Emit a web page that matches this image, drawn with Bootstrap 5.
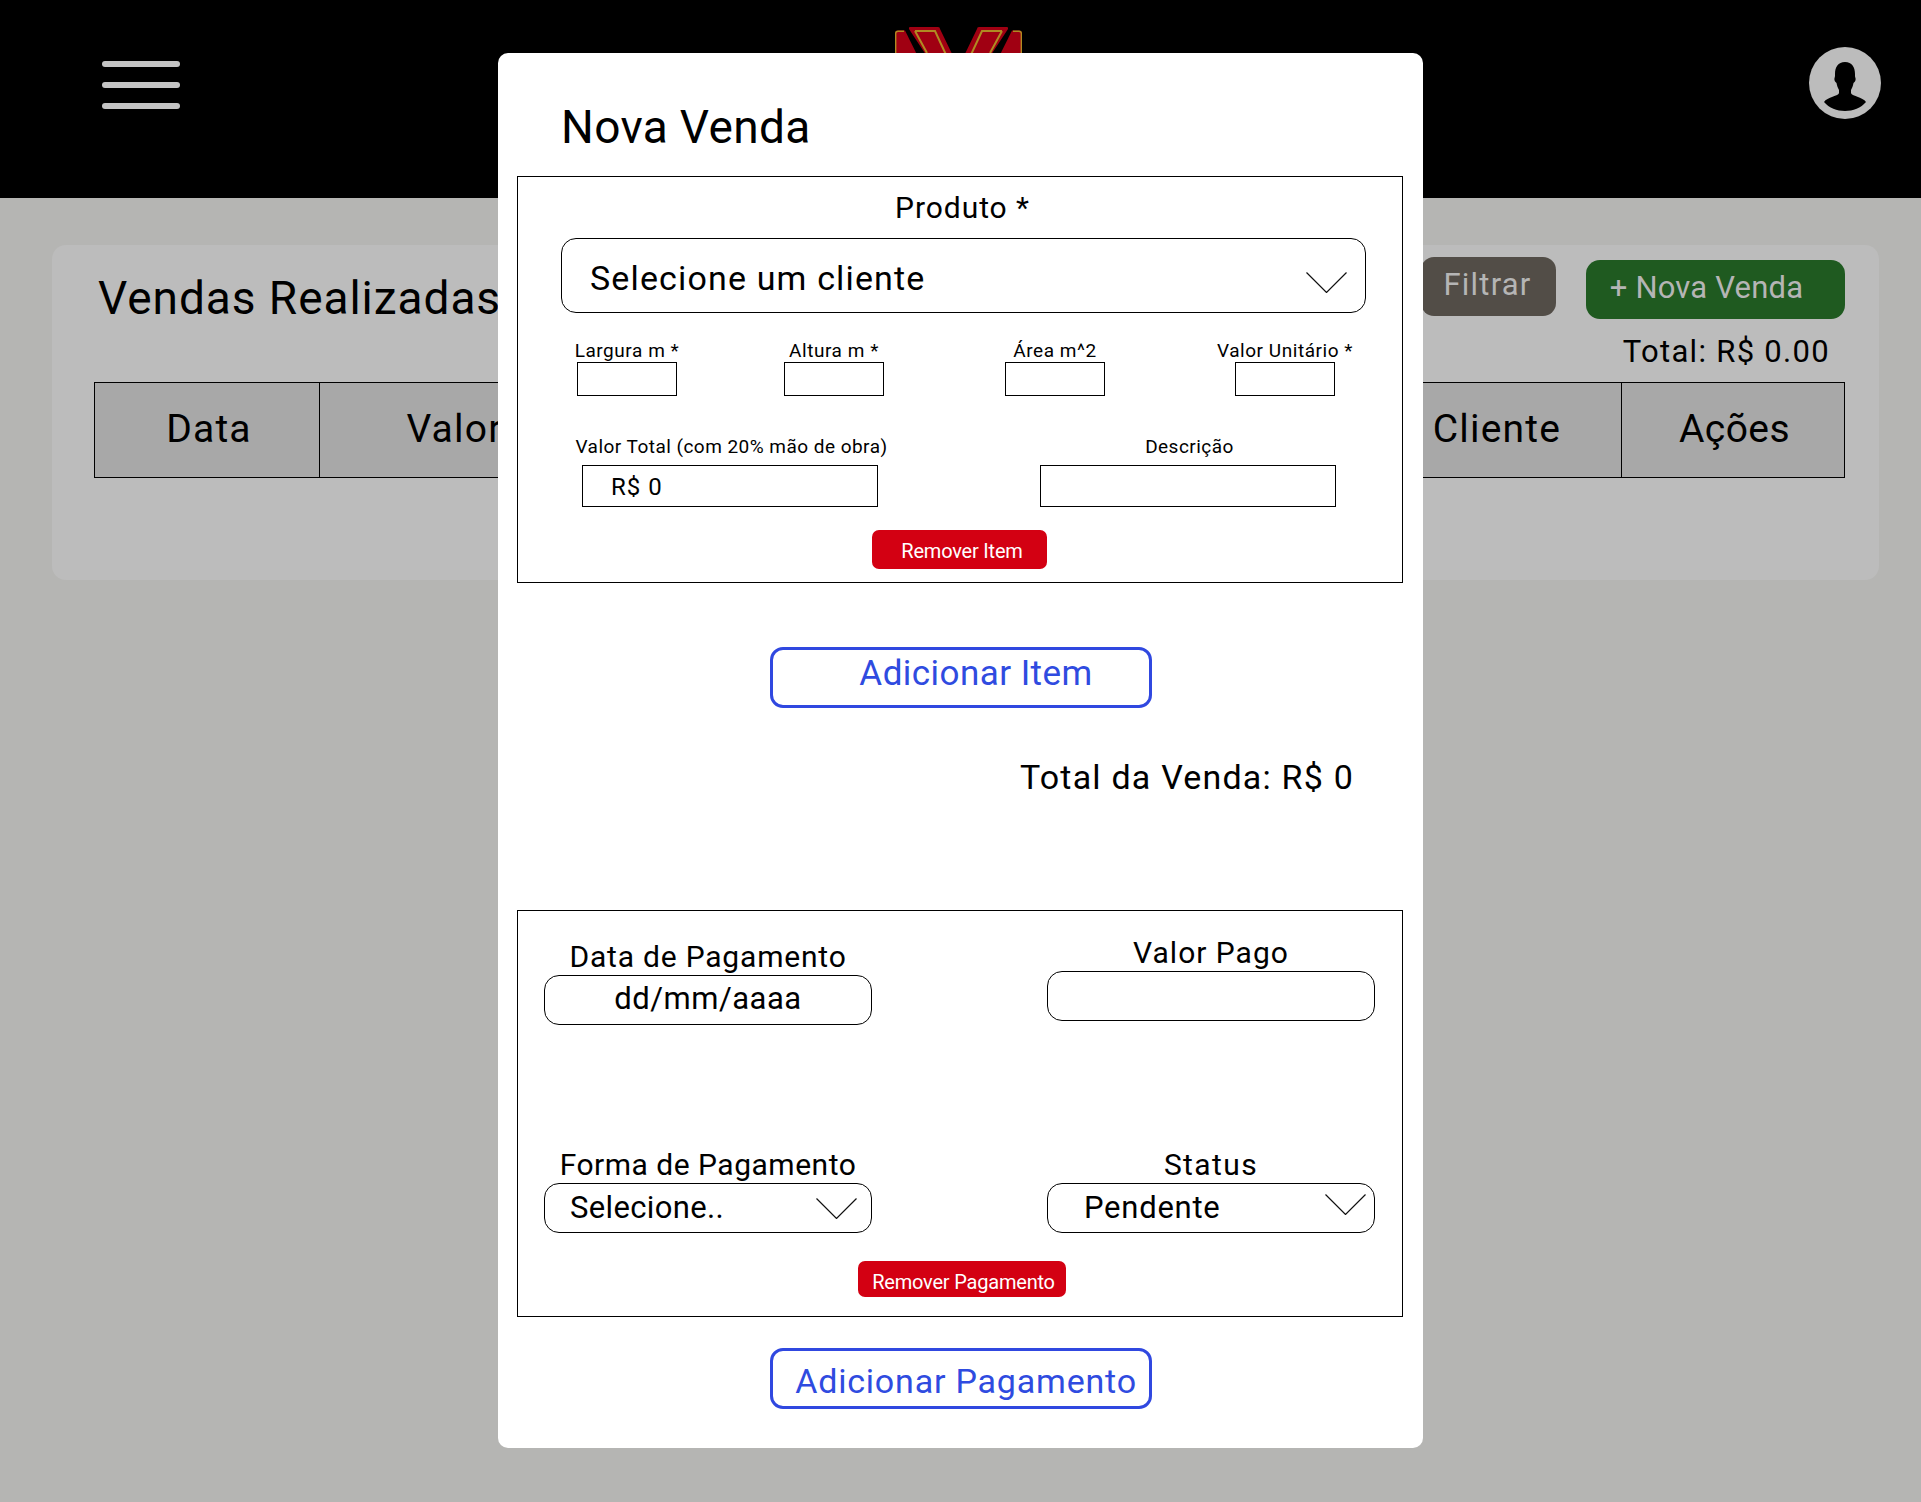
<!DOCTYPE html>
<html lang="pt-BR">
<head>
<meta charset="utf-8">
<title>Nova Venda</title>
<link href="https://cdn.jsdelivr.net/npm/bootstrap@5.3.0/dist/css/bootstrap.min.css" rel="stylesheet">
<style>
html,body{height:1502px;}
body{background:#b5b5b3;font-family:Roboto,"Liberation Sans",sans-serif;color:#000;position:relative;overflow:hidden;}
.top-bar{height:198px;background:#000;padding:0 40px 0 102px;}
.burger{width:78px;margin-top:61px;gap:15px;}
.burger span{display:block;height:6px;border-radius:3px;background:#c4c4c4;}
.brand-mark{display:block;width:127px;height:60px;margin:27px 0 0 715px;}
.avatar{display:block;width:72px;height:72px;margin-top:47px;}
.sales-card{margin:47px 0 0 52px;width:1827px;height:335px;background:#bcbcbc;border-radius:14px;padding:0 34px 0 43px;}
.sales-head{height:137px;}
.sales-title{font-size:46px;line-height:60px;font-weight:400;letter-spacing:.95px;margin:23px 0 0 3px;}
.btn-filter{width:135px;height:59px;margin:12px 6px 0 0;background:#524d47;color:#b5b5b5;border:0;border-radius:13px;font-size:31px;letter-spacing:1.2px;line-height:1;padding:0 2px 4px 0;}
.btn-new{width:259px;height:59px;margin-top:15px;background:#1f5a20;color:#b5b5b5;border:0;border-radius:14px;font-size:31px;letter-spacing:.2px;line-height:1;padding:0 18px 4px 0;}
.total-sum{font-size:31px;line-height:36px;letter-spacing:1.3px;margin:15px 15px 0 0;}
.sales-table{table-layout:fixed;width:1751px;margin:0 0 0 -1px;border:1px solid #000;border-collapse:separate;border-spacing:0;}
.sales-table th{height:94px;background:#a8a8a8;color:#000;box-shadow:none;border:0;border-right:1px solid #000;font-size:39px;font-weight:400;letter-spacing:1.2px;text-align:center;vertical-align:middle;padding:0 0 2px;}
.sales-table th:first-child{padding-left:4px;}
.sales-table th:last-child{border-right:0;letter-spacing:.4px;padding-left:3px;}
.sale-modal{position:absolute;left:498px;top:53px;width:925px;height:1395px;background:#fff;border-radius:10px;}
.modal-heading{font-size:46px;line-height:60px;font-weight:400;letter-spacing:.35px;margin:0;padding:44px 0 0 63px;height:123px;}
.group-box{margin-left:19px;width:886px;height:407px;border:1px solid #000;}
.field-title{font-size:30px;line-height:30px;letter-spacing:.95px;text-align:center;margin:0;}
.group-first .field-title{padding:16px 0 0 5px;height:46px;}
.select-main{display:block;margin:15px 0 0 43px;width:805px;height:75px;border:1px solid #000;border-radius:15px;font-size:34px;line-height:40px;letter-spacing:1.15px;color:#000;background-color:#fff;padding:4px 60px 0 28px;background-position:right 18px top 33px;background-size:41px 21px;}
.select-main,.select-small{appearance:none;background-repeat:no-repeat;background-image:url("data:image/svg+xml,%3Csvg xmlns='http://www.w3.org/2000/svg' viewBox='0 0 41 21'%3E%3Cpath d='M.5.5 20.5 20.5 40.5.5' fill='none' stroke='%23111' stroke-width='1.2'/%3E%3C/svg%3E");}
.measure-row{margin:28px 0 0 39px;}
.measure{width:140px;}
.measure+.measure{margin-left:67px;}
.measure:nth-child(3){margin-left:81px;}
.measure:nth-child(4){margin-left:90px;}
.mini-label{display:block;font-size:19px;line-height:19px;padding-bottom:2px;margin:0;letter-spacing:.55px;text-align:center;white-space:nowrap;}
.mini-input{display:block;width:100px;height:34px;margin:0 auto;border:1px solid #000;border-radius:0;padding:0;background:#fff;}
.wide-row{margin:41px 0 0 52px;}
.wide-field{width:320px;}
.wide-field+.wide-field{margin-left:138px;}
.wide-field .mini-label{line-height:20px;padding:0 0 0 3px;margin-bottom:8px;letter-spacing:.47px;}
.wide-input{display:block;width:296px;height:42px;margin:0 auto;border:1px solid #000;border-radius:0;font-size:24px;letter-spacing:1px;color:#000;padding:1px 0 0 28px;background:#fff;}
.btn-remove{background:#d30012;color:#fff;border:0;border-radius:7px;font-size:20px;line-height:1;padding:0;}
.remove-item{width:175px;height:39px;margin:23px 2px 0 0;padding:2px 0 0 6px;letter-spacing:-.2px;}
.btn-add{display:block;width:382px;height:61px;background:#fff;color:#2f4be0;border:3px solid #3048e0;border-radius:13px;font-size:35px;line-height:1;}
.add-item{margin:64px 0 0 272px;padding:0 0 8px 30px;letter-spacing:.45px;}
.add-pay{margin:31px 0 0 272px;padding:4px 0 0 10px;font-size:34px;letter-spacing:.8px;white-space:nowrap;}
.sale-total{font-size:34px;line-height:40px;letter-spacing:1.2px;text-align:right;margin:49px 69px 0 0;}
.group-pay{margin-top:113px;}
.pay-row{margin-left:26px;}
.pay-field{width:328px;}
.pay-field+.pay-field{margin-left:175px;}
.pay-top{padding-top:27px;}
.pay-left{padding-top:4px;}
.pay-label{display:block;font-size:30px;line-height:30px;margin:0 0 3px;text-align:center;white-space:nowrap;}
.track-a{letter-spacing:.5px;}
.track-b{letter-spacing:.8px;}
.track-c{letter-spacing:1px;}
.track-d{letter-spacing:1.4px;}
.pay-input{display:block;width:328px;height:50px;border:1px solid #000;border-radius:15px;font-size:31px;color:#000;background-color:#fff;padding:0;}
.date-input{padding-bottom:3px;letter-spacing:.5px;}
.pay-bottom{margin-top:125px;}
.select-small{background-size:41px 21px;line-height:44px;}
.sel-form{padding:0 50px 0 25px;letter-spacing:.35px;background-position:right 14px top 14px;}
.sel-status{padding:0 50px 0 36px;letter-spacing:.75px;background-position:right 8px top 10px;}
.remove-pay{width:208px;height:36px;margin:28px 0 0 0;padding:5px 0 0 3px;letter-spacing:-.2px;}
.remove-pay-wrap{padding-left:4px;}
</style>
</head>
<body>
<header class="top-bar d-flex align-items-start">
  <div class="burger d-flex flex-column"><span></span><span></span><span></span></div>
  <svg class="brand-mark" viewBox="0 0 127 60" aria-hidden="true">
    <path d="M3 3.5H10L38 60H0V6.5Q0 3.500 3 3.500Z" fill="#a00012"/>
    <path d="M124 3.500H117L89 60H127V6.500Q127 3.500 124 3.500Z" fill="#a00012"/>
    <path d="M.7 60V6.500Q.7 4.200 3 4.200H9M126.300 60V6.500Q126.300 4.200 124 4.200H118" fill="none" stroke="#b08a22" stroke-width="1.400"/>
    <path d="M15 0H43Q45 0 45 2L73 60H52L14 2Q13.500 0 15 0Z" fill="#a00012"/>
    <path d="M112 0H84Q82 0 82 2L54 60H75L113 2Q113.500 0 112 0Z" fill="#a00012"/>
    <path d="M20 4H40L66 60M32 26 20 4" fill="none" stroke="#b08a22" stroke-width="2"/>
    <path d="M107 4H87L61 60M95 26 107 4" fill="none" stroke="#b08a22" stroke-width="2"/>
  </svg>
  <svg class="avatar ms-auto" viewBox="0 0 72 72" aria-hidden="true">
    <circle cx="36" cy="36" r="36" fill="#bcbcbc"/>
    <path d="M36 15C29 15 26 20 26 27C26 29 26 30 25.500 31C25 33 26 35 27.500 36C28 39 29 41 30 43V46C30 49 18 50 15 55C20 61 28 64 36 64C44 64 52 61 57 55C54 50 42 49 42 46V43C43 41 44 39 44.500 36C46 35 47 33 46.500 31C46 30 46 29 46 27C46 20 43 15 36 15Z" fill="#000"/>
  </svg>
</header>

<main class="sales-card">
  <div class="sales-head d-flex justify-content-between align-items-start">
    <h1 class="sales-title">Vendas Realizadas</h1>
    <div class="d-flex flex-column align-items-end">
      <div class="d-flex align-items-start gap-4">
        <button class="btn btn-filter" type="button">Filtrar</button>
        <button class="btn btn-new" type="button">+ Nova Venda</button>
      </div>
      <div class="total-sum">Total: R$ 0.00</div>
    </div>
  </div>
  <table class="table sales-table">
    <colgroup><col style="width:225px"><col style="width:270px"><col><col style="width:249px"><col style="width:222px"></colgroup>
    <thead><tr><th>Data</th><th>Valor</th><th></th><th>Cliente</th><th>Ações</th></tr></thead>
  </table>
</main>

<section class="sale-modal">
  <h2 class="modal-heading">Nova Venda</h2>
  <div class="group-box group-first">
    <p class="field-title">Produto *</p>
    <select class="select-main"><option>Selecione um cliente</option></select>
    <div class="measure-row d-flex">
      <div class="measure"><label class="mini-label">Largura m *</label><input class="mini-input" type="text"></div>
      <div class="measure"><label class="mini-label">Altura m *</label><input class="mini-input" type="text"></div>
      <div class="measure"><label class="mini-label">Área m^2</label><input class="mini-input" type="text"></div>
      <div class="measure"><label class="mini-label">Valor Unitário *</label><input class="mini-input" type="text"></div>
    </div>
    <div class="wide-row d-flex">
      <div class="wide-field"><label class="mini-label">Valor Total (com 20% mão de obra)</label><input class="wide-input" type="text" value="R$ 0"></div>
      <div class="wide-field"><label class="mini-label">Descrição</label><input class="wide-input" type="text"></div>
    </div>
    <div class="d-flex justify-content-center"><button class="btn btn-remove remove-item" type="button">Remover Item</button></div>
  </div>
  <button class="btn btn-add add-item" type="button">Adicionar Item</button>
  <div class="sale-total">Total da Venda: R$ 0</div>
  <div class="group-box group-pay">
    <div class="pay-row pay-top d-flex">
      <div class="pay-field pay-left"><label class="pay-label track-b">Data de Pagamento</label><input class="pay-input date-input text-center" type="text" value="dd/mm/aaaa"></div>
      <div class="pay-field"><label class="pay-label track-c">Valor Pago</label><input class="pay-input" type="text"></div>
    </div>
    <div class="pay-row pay-bottom d-flex">
      <div class="pay-field"><label class="pay-label track-a">Forma de Pagamento</label><select class="pay-input select-small sel-form"><option>Selecione..</option></select></div>
      <div class="pay-field"><label class="pay-label track-d">Status</label><select class="pay-input select-small sel-status"><option>Pendente</option></select></div>
    </div>
    <div class="d-flex justify-content-center remove-pay-wrap"><button class="btn btn-remove remove-pay" type="button">Remover Pagamento</button></div>
  </div>
  <button class="btn btn-add add-pay" type="button">Adicionar Pagamento</button>
</section>
<script src="https://cdn.jsdelivr.net/npm/bootstrap@5.3.0/dist/js/bootstrap.bundle.min.js"></script>
</body>
</html>
